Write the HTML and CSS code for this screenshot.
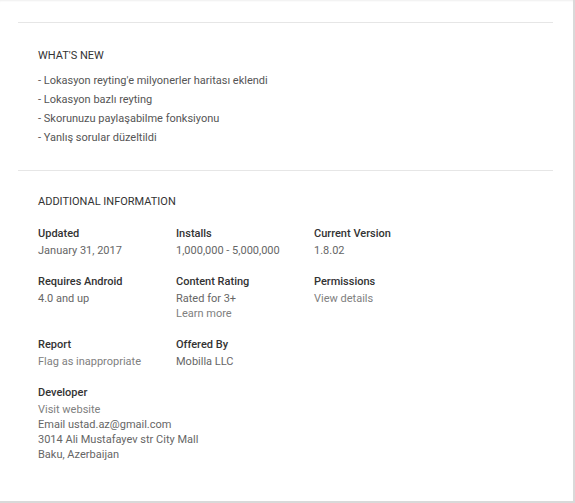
FILE: index.html
```html
<!DOCTYPE html>
<html>
<head>
<meta charset="utf-8">
<link rel="stylesheet" href="styles.css">
</head>
<body>
<div class="card">
  <div class="inner">
    <div class="prev"></div>
    <section class="sec whats-new">
      <h2 class="title">What's New</h2>
      <div class="recent">
        <div>- Lokasyon reyting'e milyonerler haritası eklendi</div>
        <div>- Lokasyon bazlı reyting</div>
        <div>- Skorunuzu paylaşabilme fonksiyonu</div>
        <div>- Yanlış sorular düzeltildi</div>
      </div>
    </section>
    <section class="sec additional">
      <h2 class="title">Additional Information</h2>
      <div class="grid">
        <div class="meta">
          <div class="label">Updated</div>
          <div class="value">January 31, 2017</div>
        </div>
        <div class="meta">
          <div class="label">Installs</div>
          <div class="value">1,000,000 - 5,000,000</div>
        </div>
        <div class="meta">
          <div class="label">Current Version</div>
          <div class="value">1.8.02</div>
        </div>
        <div class="meta">
          <div class="label">Requires Android</div>
          <div class="value">4.0 and up</div>
        </div>
        <div class="meta">
          <div class="label">Content Rating</div>
          <div class="value">Rated for 3+</div>
          <div class="value link">Learn more</div>
        </div>
        <div class="meta">
          <div class="label">Permissions</div>
          <div class="value link">View details</div>
        </div>
        <div class="meta">
          <div class="label">Report</div>
          <div class="value link">Flag as inappropriate</div>
        </div>
        <div class="meta">
          <div class="label">Offered By</div>
          <div class="value">Mobilla LLC</div>
        </div>
        <div class="meta empty"></div>
        <div class="meta wide">
          <div class="label">Developer</div>
          <div class="value link">Visit website</div>
          <div class="value">Email ustad.az@gmail.com</div>
          <div class="value">3014 Ali Mustafayev str City Mall</div>
          <div class="value">Baku, Azerbaijan</div>
        </div>
      </div>
    </section>
  </div>
</div>
</body>
</html>
```
FILE: styles.css
```css
html, body {
  margin: 0;
  padding: 0;
  background: #ffffff;
}
body {
  font-family: Roboto, "Liberation Sans", Arial, sans-serif;
  -webkit-font-smoothing: antialiased;
}
.card {
  width: 573px;
  height: 501px;
  background: #ffffff;
  border-right: 2px solid #d9d9d9;
  border-bottom: 2px solid #d9d9d9;
  box-shadow: inset 0 2px 2px -1px #efefef;
}
.inner {
  margin: 0 20px 0 18px;
}
.prev {
  height: 22px;
  border-bottom: 1px solid #e6e6e6;
}
.sec {
  padding: 23px 0 0 20px;
}
.whats-new {
  padding-top: 25px;
  padding-bottom: 23px;
  border-bottom: 1px solid #e6e6e6;
}
.title {
  margin: 0;
  font-size: 11px;
  line-height: 16px;
  font-weight: 400;
  text-transform: uppercase;
  color: #333333;
}
.recent {
  margin-top: 7px;
  font-size: 11px;
  line-height: 19px;
  color: #555555;
}
.grid {
  margin-top: 15px;
  display: grid;
  grid-template-columns: 138px 138px 138px;
  row-gap: 15px;
}
.wide {
  grid-column: 1 / span 3;
}
.label {
  font-size: 11px;
  line-height: 18px;
  font-weight: 500;
  color: #333333;
}
.value {
  font-size: 11px;
  line-height: 15px;
  color: #666666;
}
.value.link {
  color: #808080;
}
```
